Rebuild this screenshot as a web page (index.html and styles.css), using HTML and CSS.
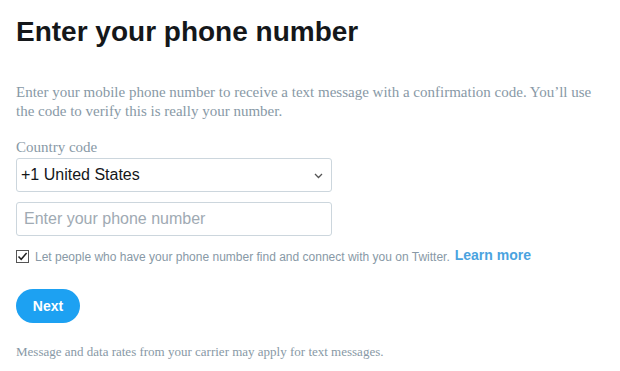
FILE: index.html
```html
<!DOCTYPE html>
<html>
<head>
<meta charset="utf-8">
<link rel="stylesheet" href="styles.css">
</head>
<body>
<div class="page">
  <h1 class="title">Enter your phone number</h1>
  <p class="intro">Enter your mobile phone number to receive a text message with a confirmation code. You’ll use the code to verify this is really your number.</p>
  <label class="label">Country code</label>
  <div class="select">
    <span>+1 United States</span>
    <svg class="chev" width="9" height="6" viewBox="0 0 9 6"><path d="M1 1 L4.5 4.5 L8 1" fill="none" stroke="#555" stroke-width="1.3"/></svg>
  </div>
  <div class="input">Enter your phone number</div>
  <div class="check-row">
    <span class="box"><svg width="11" height="11" viewBox="0 0 11 11"><path d="M1.5 5.5 L4.2 8.3 L9.6 2" fill="none" stroke="#222" stroke-width="1.5"/></svg></span>
    <span class="check-text">Let people who have your phone number find and connect with you on Twitter.</span>
    <a class="learn">Learn more</a>
  </div>
  <button class="next">Next</button>
  <p class="footnote">Message and data rates from your carrier may apply for text messages.</p>
</div>
</body>
</html>
```
FILE: styles.css
```css
html, body { margin: 0; padding: 0; background: #fff; }
.page { padding: 0 16px; display: flex; flex-direction: column; align-items: flex-start; }
.title {
  font-family: "Liberation Sans", Arial, sans-serif;
  font-weight: bold; font-size: 28px; color: #14171a;
  margin: 15px 0 0; line-height: 34px;
}
.intro {
  font-family: "Liberation Serif", "Times New Roman", serif;
  font-size: 15px; line-height: 19px; color: #8899a6;
  margin: 34px 0 0; width: 590px;
}
.label {
  font-family: "Liberation Serif", "Times New Roman", serif;
  font-size: 15px; color: #8899a6; margin-top: 17px; line-height: 18px;
}
.select, .input {
  box-sizing: border-box; width: 316px; height: 34px;
  border: 1px solid #ccd6dd; border-radius: 3px;
  font-family: "Liberation Sans", Arial, sans-serif; font-size: 16px;
  display: flex; align-items: center; padding: 0 8px 0 4px;
}
.select { margin-top: 2px; color: #14171a; justify-content: space-between; }
.chev { margin-top: 1px; }
.input { margin-top: 10px; color: #a0aab3; padding-left: 7px; }
.check-row {
  display: flex; align-items: center; margin-top: 13px;
  font-family: "Liberation Sans", Arial, sans-serif;
}
.box {
  box-sizing: border-box; width: 13px; height: 13px; border: 1px solid #555;
  display: flex; align-items: center; justify-content: center; background: #fff;
}
.check-text { font-size: 12px; color: #8899a6; margin-left: 6px; margin-top: 1px; }
.learn { font-size: 14px; font-weight: bold; color: #4aa3df; margin-left: 5px; margin-top: -3px; }
.next {
  margin-top: 25px; width: 64px; height: 34px; border: none; border-radius: 17px;
  background: #1da1f2; color: #fff;
  font-family: "Liberation Sans", Arial, sans-serif; font-weight: bold; font-size: 14px;
  padding: 0;
}
.footnote {
  font-family: "Liberation Serif", "Times New Roman", serif;
  font-size: 13px; color: #8899a6; margin: 21px 0 0;
}
```
